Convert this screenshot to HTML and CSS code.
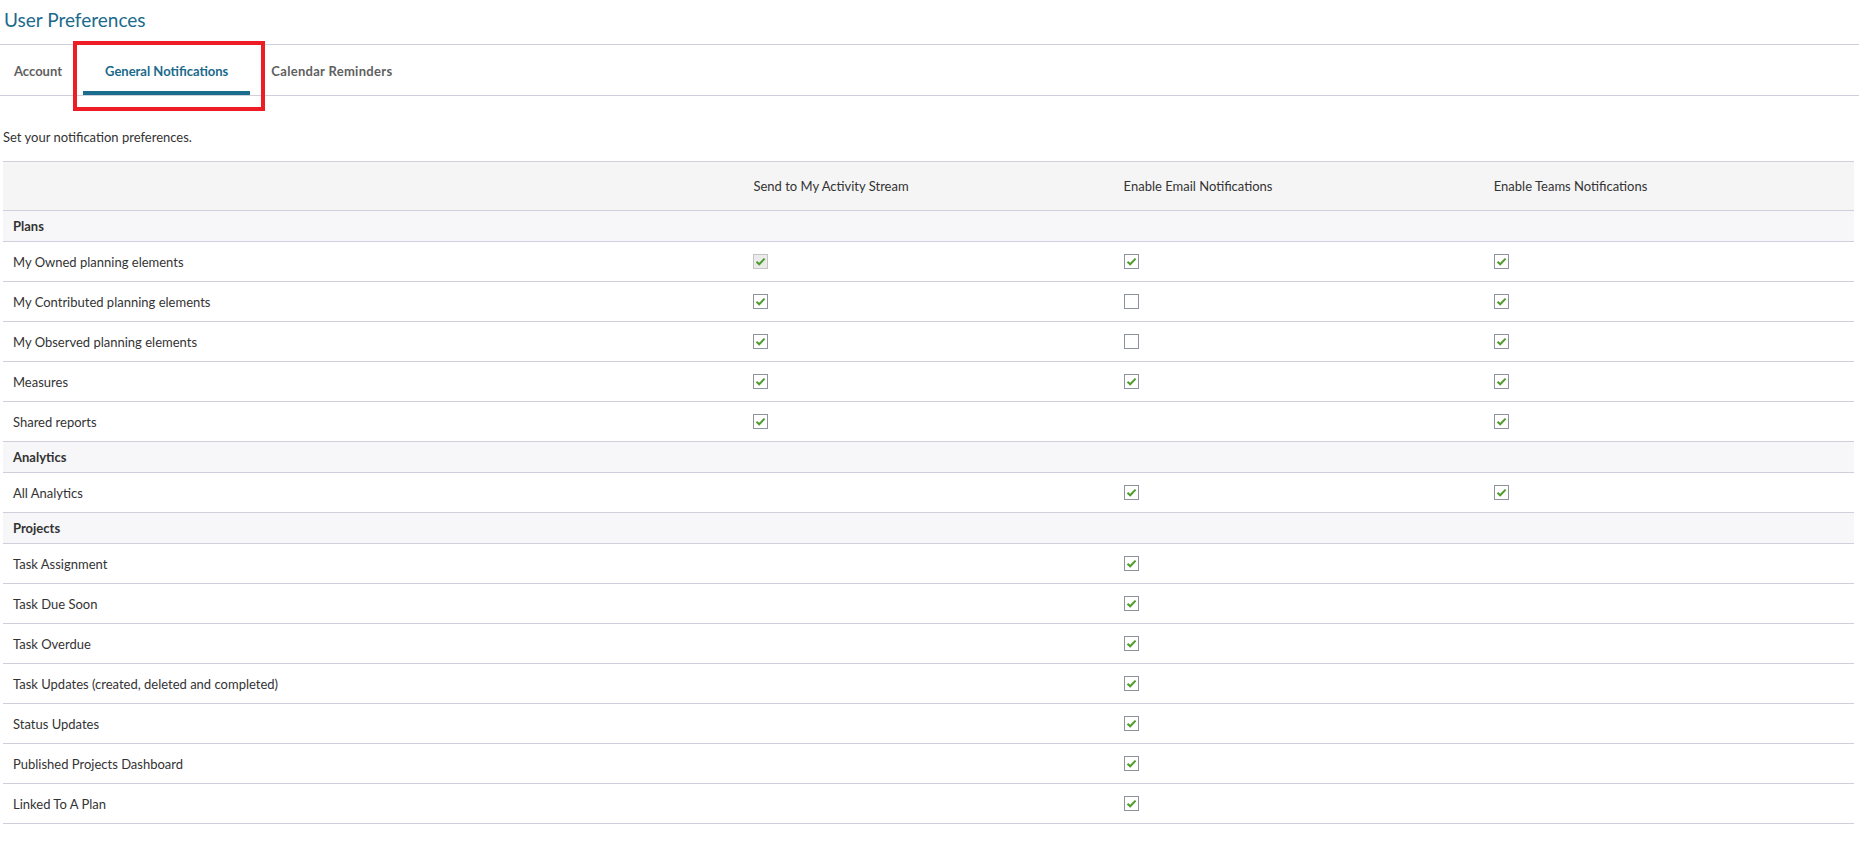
FILE: index.html
```html
<!DOCTYPE html>
<html>
<head>
    <title>User Preferences</title>
    <link rel="stylesheet" href="styles.css">
</head>
<body>
    <h1 class="page-title">User Preferences</h1>

    <div class="tabs">
        <a class="tab tab-first">Account</a>
        <a class="tab active">General Notifications</a>
        <a class="tab tab-last">Calendar Reminders</a>
        <div class="highlight"></div>
    </div>

    <p class="intro">Set your notification preferences.</p>

    <table class="prefs">
        <colgroup>
            <col class="col-label">
            <col class="col-opt">
            <col class="col-opt">
            <col class="col-opt">
        </colgroup>
        <thead>
            <tr>
                <th></th>
                <th>Send to My Activity Stream</th>
                <th>Enable Email Notifications</th>
                <th>Enable Teams Notifications</th>
            </tr>
        </thead>
        <tbody id="rows"></tbody>
    </table>

    <script>
        // 1 = checked, 0 = unchecked, null = not available, 'd' = checked + disabled
        const groups = [
            { name: 'Plans', rows: [
                ['My Owned planning elements', 'd', 1, 1],
                ['My Contributed planning elements', 1, 0, 1],
                ['My Observed planning elements', 1, 0, 1],
                ['Measures', 1, 1, 1],
                ['Shared reports', 1, null, 1]
            ]},
            { name: 'Analytics', rows: [
                ['All Analytics', null, 1, 1]
            ]},
            { name: 'Projects', rows: [
                ['Task Assignment', null, 1, null],
                ['Task Due Soon', null, 1, null],
                ['Task Overdue', null, 1, null],
                ['Task Updates (created, deleted and completed)', null, 1, null],
                ['Status Updates', null, 1, null],
                ['Published Projects Dashboard', null, 1, null],
                ['Linked To A Plan', null, 1, null]
            ]}
        ];

        const tick = '<svg viewBox="0 0 13 13" width="13" height="13"><polyline points="2.5,6.8 5.2,9.3 10.6,3.6" fill="none" stroke="#4e9c2d" stroke-width="2"/></svg>';

        function box(value) {
            if (value === null) return '';
            if (value === 0) return '<span class="check"></span>';
            const cls = value === 'd' ? 'check disabled' : 'check';
            return `<span class="${cls}">${tick}</span>`;
        }

        document.getElementById('rows').innerHTML = groups.map(group => {
            const head = `<tr class="group"><td colspan="4">${group.name}</td></tr>`;
            const body = group.rows.map(row => {
                return `<tr class="item"><td>${row[0]}</td><td>${box(row[1])}</td><td>${box(row[2])}</td><td>${box(row[3])}</td></tr>`;
            }).join('');
            return head + body;
        }).join('');
    </script>
</body>
</html>
```

FILE: styles.css
```css
body {
    font-family: Lato, "Noto Sans", sans-serif;
    font-size: 13px;
    color: #333;
    margin: 0;
    padding: 0 5px 0 3px;
}
.page-title {
    font-size: 19px;
    font-weight: normal;
    line-height: 24px;
    color: #1b6a8b;
    margin: 0;
    padding: 8px 0 12px 1px;
}
.tabs {
    position: relative;
    display: flex;
    height: 50px;
    margin: 0 -5px 0 -3px;
    border-top: 1px solid #cfd0de;
    border-bottom: 1px solid #cfd0de;
}
.tab {
    display: flex;
    align-items: center;
    box-sizing: border-box;
    height: 50px;
    padding: 6px 22px 0;
    font-weight: bold;
    color: #5f5f5f;
    border-bottom: 4px solid transparent;
}
.tab-first {
    padding-left: 14px;
    padding-right: 21px;
}
.tab-last {
    padding-left: 21px;
    letter-spacing: 0.3px;
}
.tab.active {
    color: #1b6a8b;
    border-bottom-color: #1b6d8e;
}
.highlight {
    position: absolute;
    left: 73px;
    top: -4px;
    width: 192px;
    height: 70px;
    box-sizing: border-box;
    border: 4px solid #ee1c24;
}
.intro {
    margin: 32px 0 15px;
    line-height: 18px;
}
.prefs {
    width: 100%;
    table-layout: fixed;
    border-collapse: collapse;
}
.col-label {
    width: 40%;
}
.col-opt {
    width: 20%;
}
.prefs th,
.prefs td {
    padding: 0 10px;
    text-align: left;
    vertical-align: middle;
    border-top: 1px solid #cfd0de;
    border-bottom: 1px solid #cfd0de;
}
.prefs th {
    height: 48px;
    font-weight: normal;
    background-color: #f5f5f5;
}
.group td {
    height: 30px;
    font-weight: bold;
    background-color: #f7f7f9;
}
.item td {
    height: 39px;
}
.check {
    display: block;
    width: 15px;
    height: 15px;
    box-sizing: border-box;
    border: 1px solid #8d939e;
    background-color: #fff;
}
.check svg {
    display: block;
}
.check.disabled {
    border-color: #c4c4c4;
    background-color: #ebebeb;
}
```
